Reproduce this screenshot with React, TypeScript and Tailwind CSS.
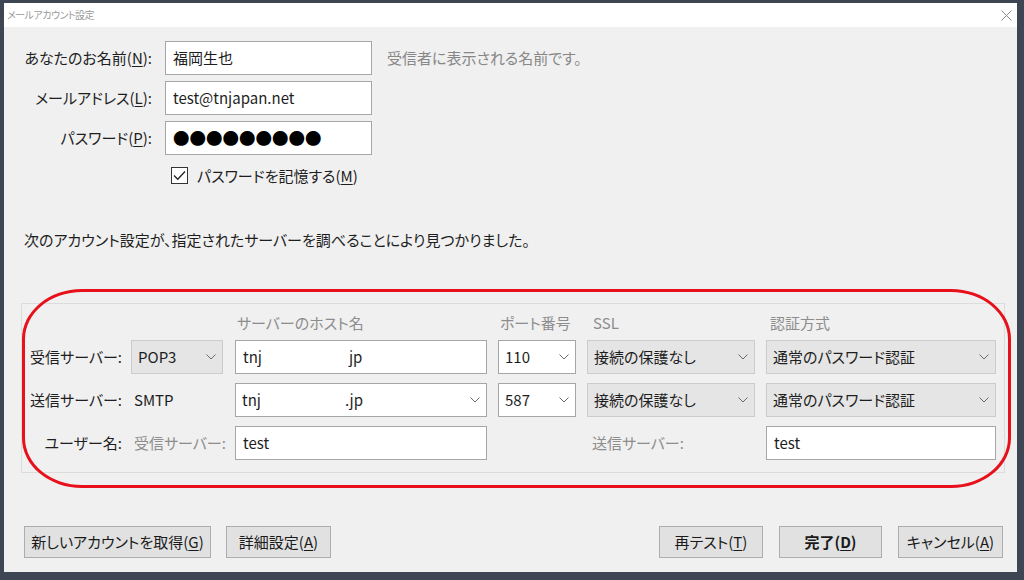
import React from 'react';

// mnemonic letter, underlined like a Windows access key
const Mn = ({ k }: { k: string }) => <span className="underline underline-offset-[2px]">{k}</span>;

const Chevron = () => (
  <svg width="10" height="6" viewBox="0 0 10 6" className="shrink-0">
    <path d="M0.5 0.5 L5 5 L9.5 0.5" fill="none" stroke="#6a6a6a" strokeWidth="1" />
  </svg>
);

const Select = ({
  className,
  children,
}: {
  className: string;
  children: React.ReactNode;
}) => (
  <div className={`flex h-[34px] items-center justify-between border pl-[6px] pr-[6px] ${className}`}>
    <span className="truncate">{children}</span>
    <Chevron />
  </div>
);

const TextBox = ({ className, children }: { className: string; children: React.ReactNode }) => (
  <div className={`flex h-[34px] items-center border border-[#a6a6a6] bg-white pl-[7px] ${className}`}>
    {children}
  </div>
);

const Button = ({ className, children }: { className: string; children: React.ReactNode }) => (
  <button className={`flex h-[32px] items-center justify-center border border-[#adadad] bg-[#e1e1e1] text-[#1a1a1a] ${className}`}>
    {children}
  </button>
);

export default function App() {
  return (
    <div className="flex h-[580px] w-[1024px] flex-col bg-[#3e4553] pb-[8px] pl-[4px] pr-[7px] pt-[3px] font-['Noto_Sans_CJK_JP','Noto_Sans',sans-serif] [font-feature-settings:'palt']">
      {/* title bar */}
      <div className="flex h-[24px] items-center justify-between bg-white pl-[3px] pr-[5px]">
        <span className="text-[10px] leading-[14px] tracking-[-0.5px] text-[#9a9a9a]">メールアカウント設定</span>
        <svg width="11" height="11" viewBox="0 0 11 11">
          <path d="M0.5 0.5 L10.5 10.5 M10.5 0.5 L0.5 10.5" stroke="#8a8a8a" strokeWidth="1" />
        </svg>
      </div>

      {/* dialog body */}
      <div className="relative flex flex-1 flex-col bg-[#f0f0f0] text-[15px] leading-[20px] text-[#1e1e1e]">
        <div className="mt-[14px] flex flex-col gap-[6px]">
          <div className="flex h-[34px] items-center">
            <span className="w-[148px] text-right">
              あなたのお名前(<Mn k="N" />):
            </span>
            <TextBox className="ml-[13px] w-[207px]">福岡生也</TextBox>
            <span className="ml-[15px] text-[#878787]">受信者に表示される名前です。</span>
          </div>
          <div className="flex h-[34px] items-center">
            <span className="w-[148px] text-right">
              メールアドレス(<Mn k="L" />):
            </span>
            <TextBox className="ml-[13px] w-[207px]">test@tnjapan.net</TextBox>
          </div>
          <div className="flex h-[34px] items-center">
            <span className="w-[148px] text-right">
              パスワード(<Mn k="P" />):
            </span>
            <TextBox className="ml-[13px] w-[207px] text-[16.5px] text-black">●●●●●●●●●</TextBox>
          </div>
        </div>

        <div className="ml-[167px] mt-[12px] flex h-[17px] items-center">
          <div className="flex h-[17px] w-[17px] items-center justify-center border border-[#333333] bg-white">
            <svg width="13" height="11" viewBox="0 0 13 11">
              <path d="M1 5.5 L4.8 9.3 L12 1.5" fill="none" stroke="#222222" strokeWidth="1.3" />
            </svg>
          </div>
          <span className="ml-[9px]">
            パスワードを記憶する(<Mn k="M" />)
          </span>
        </div>

        <p className="ml-[20px] mt-[46px]">
          次のアカウント設定が、指定されたサーバーを調べることにより見つかりました。
        </p>

        {/* server settings group */}
        <div className="ml-[17px] mt-[53px] w-[984px] border border-[#dcdcdc] pb-[12px] pt-[9px]">
          <div className="grid grid-cols-[109px_104px_263px_89px_179px_230px] text-[#8d8d8d]">
            <span />
            <span />
            <span className="pl-[2px]">サーバーのホスト名</span>
            <span className="pl-[2px]">ポート番号</span>
            <span className="pl-[6px]">SSL</span>
            <span className="pl-[4px]">認証方式</span>
          </div>

          <div className="mt-[7px] grid grid-cols-[109px_104px_263px_89px_179px_230px] items-center gap-y-[9px]">
            <span className="pr-[9px] text-right">受信サーバー:</span>
            <Select className="w-[92px] border-[#cccccc] bg-[#e5e5e5]">POP3</Select>
            <TextBox className="w-[252px] pl-[6px]">
              <span>tnj</span>
              <span className="ml-[87px]">jp</span>
            </TextBox>
            <Select className="w-[78px] border-[#a6a6a6] bg-white">110</Select>
            <Select className="w-[168px] border-[#cccccc] bg-[#e5e5e5]">接続の保護なし</Select>
            <Select className="w-[230px] border-[#cccccc] bg-[#e5e5e5]">通常のパスワード認証</Select>

            <span className="pr-[9px] text-right">送信サーバー:</span>
            <span className="pl-[3px]">SMTP</span>
            <Select className="w-[252px] border-[#a6a6a6] bg-white">
              <span>tnj</span>
              <span className="ml-[84px]">.jp</span>
            </Select>
            <Select className="w-[78px] border-[#a6a6a6] bg-white">587</Select>
            <Select className="w-[168px] border-[#cccccc] bg-[#e5e5e5]">接続の保護なし</Select>
            <Select className="w-[230px] border-[#cccccc] bg-[#e5e5e5]">通常のパスワード認証</Select>

            <span className="pr-[9px] text-right">ユーザー名:</span>
            <span className="pl-[3px] text-[#8d8d8d]">受信サーバー:</span>
            <TextBox className="w-[252px] pl-[6px]">test</TextBox>
            <span />
            <span className="pl-[5px] text-[#8d8d8d]">送信サーバー:</span>
            <TextBox className="w-[230px] pl-[6px]">test</TextBox>
          </div>
        </div>

        {/* red annotation drawn over the group */}
        <div className="pointer-events-none absolute left-[18px] top-[262px] h-[199px] w-[989px] rounded-[60px/50px] border-[3px] border-[#e8101a]" />

        <div className="mt-[53px] flex">
          <Button className="ml-[20px] w-[187px]">
            新しいアカウントを取得(<Mn k="G" />)
          </Button>
          <Button className="ml-[15px] w-[105px]">
            詳細設定(<Mn k="A" />)
          </Button>
          <Button className="ml-auto w-[104px]">
            再テスト(<Mn k="T" />)
          </Button>
          <Button className="ml-[16px] w-[103px] font-bold">
            完了(<Mn k="D" />)
          </Button>
          <Button className="ml-[16px] mr-[14px] w-[105px]">
            キャンセル(<Mn k="A" />)
          </Button>
        </div>
      </div>
    </div>
  );
}
